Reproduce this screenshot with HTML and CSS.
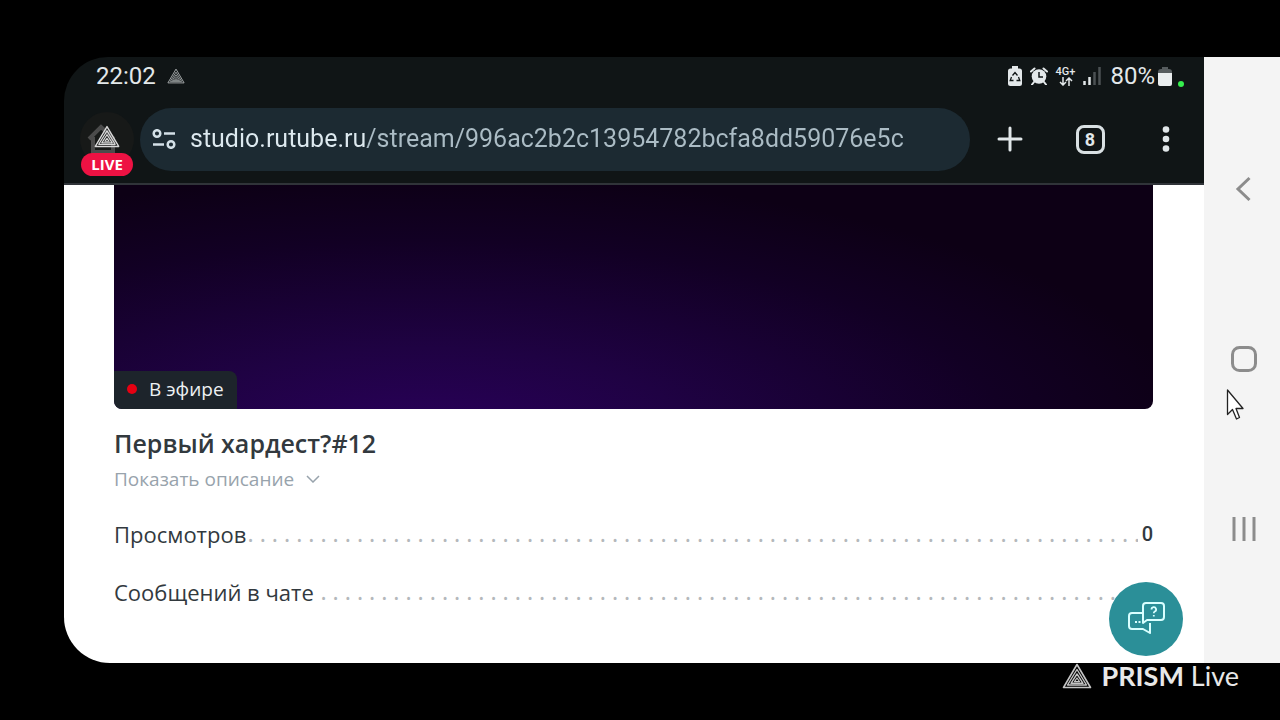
FILE: index.html
```html
<!DOCTYPE html>
<html lang="ru">
<head>
    <meta charset="UTF-8">
    <meta name="viewport" content="width=device-width, initial-scale=1.0">
    <title>Первый хардест?#12</title>
    <link rel="stylesheet" href="styles.css">
</head>
<body>

    <!-- Shared logo: nested triangles -->
    <svg class="sprite" aria-hidden="true">
        <symbol id="prism" viewBox="0 0 30 26">
            <g fill="none" stroke="currentColor" stroke-linejoin="round">
                <path d="M15 1.5 28.5 24.5H1.5Z" stroke-width="1.6"/>
                <path d="M15 6.5 24.5 22H5.5Z" stroke-width="1.4"/>
                <path d="M15 11 21 20.3H9Z" stroke-width="1.4"/>
                <path d="M15 15 17.5 18.6H12.5Z" stroke-width="1.2"/>
            </g>
        </symbol>
    </svg>

    <div class="phone">
        <main class="screen">
            <header class="browser">
                <div class="status-bar">
                    <span>22:02</span>
                    <svg class="status-logo" width="18" height="16"><use href="#prism"/></svg>
                    <div class="status-icons">
                        <svg width="14" height="20" viewBox="0 0 14 20">
                            <path d="M4 0h6v2.500h1.500A2.500 2.500 0 0 1 14 5v12.500a2.500 2.500 0 0 1-2.500 2.500h-9A2.500 2.500 0 0 1 0 17.500V5a2.500 2.500 0 0 1 2.500-2.500H4Z" fill="#e3e8ea"/>
                            <path d="M4.500 9.500 7 6.500l2.500 3M10.500 11l1.300 3.500H8.500M5.500 14.500H2.200L3.500 11" fill="none" stroke="#101617" stroke-width="1.300"/>
                        </svg>
                        <svg width="18" height="18" viewBox="0 0 18 18">
                            <circle cx="9" cy="9.500" r="7.300" fill="#e3e8ea"/>
                            <path d="M1 4.500 4.500 1.500M17 4.500 13.500 1.500M4 15l-2 2.500M14 15l2 2.500" stroke="#e3e8ea" stroke-width="2" stroke-linecap="round"/>
                            <path d="M9 5v5h4" fill="none" stroke="#101617" stroke-width="1.500"/>
                        </svg>
                        <span class="network">
                            4G+
                            <svg width="14" height="9" viewBox="0 0 14 9">
                                <path d="M4 0v8M1 5l3 3 3-3M10 9V1M7 4l3-3 3 3" fill="none" stroke="#e3e8ea" stroke-width="1.500"/>
                            </svg>
                        </span>
                        <svg width="18" height="18" viewBox="0 0 18 18">
                            <path d="M1.500 14v4M6.500 10v8" stroke="#e3e8ea" stroke-width="2.500"/>
                            <path d="M11.500 5v13M16.500 0v18" stroke="#4b5153" stroke-width="2.500"/>
                        </svg>
                    </div>
                    <span class="battery">80%
                        <svg width="14" height="19" viewBox="0 0 14 19">
                            <path d="M0 7V5a3 3 0 0 1 3-3h1V0h6v2h1a3 3 0 0 1 3 3v2Z" fill="#565c5e"/>
                            <path d="M0 6h14v11a2 2 0 0 1-2 2H2a2 2 0 0 1-2-2Z" fill="#e9edee"/>
                        </svg>
                    </span>
                    <i class="camera-dot"></i>
                </div>
                <div class="toolbar">
                    <button class="live-button" aria-label="Home">
                        <svg width="54" height="54" viewBox="0 0 54 54">
                            <path d="M13 25v15h20V25M9 27 21 15l13 12" fill="none" stroke="#4b4b4b" stroke-width="4"/>
                            <use href="#prism" x="14" y="13" width="26" height="23"/>
                        </svg>
                        <span class="live-badge">LIVE</span>
                    </button>
                    <div class="address">
                        <svg width="24" height="20" viewBox="0 0 24 20" aria-hidden="true">
                            <g fill="none" stroke="#d3e0e7" stroke-width="2.500">
                                <circle cx="5" cy="4.500" r="3.300"/>
                                <circle cx="19" cy="15.500" r="3.300"/>
                                <path d="M12 4.500h11M1 15.500h11"/>
                            </g>
                        </svg>
                        <input class="url" type="text" aria-label="Address" value="studio.rutube.ru/stream/996ac2b2c13954782bcfa8dd59076e5c">
                    </div>
                    <button class="tool" aria-label="New tab">
                        <svg width="26" height="26" viewBox="0 0 26 26"><path d="M13 2v22M2 13h22" stroke="#e1e7e9" stroke-width="3" stroke-linecap="round"/></svg>
                    </button>
                    <button class="tool" aria-label="Tabs"><span class="tab-count">8</span></button>
                    <button class="tool tool-menu" aria-label="Menu">
                        <svg width="8" height="26" viewBox="0 0 8 26" fill="#e1e7e9"><circle cx="4" cy="3.500" r="3.300"/><circle cx="4" cy="13" r="3.300"/><circle cx="4" cy="22.500" r="3.300"/></svg>
                    </button>
                </div>
            </header>

            <div class="page">
                <div class="preview">
                    <span class="on-air">В эфире</span>
                </div>
                <h1>Первый хардест?#12</h1>
                <button class="show-more">Показать описание
                    <svg width="14" height="8" viewBox="0 0 14 8"><path d="M1 1l6 6 6-6" fill="none" stroke="currentColor" stroke-width="1.500"/></svg>
                </button>
                <dl class="stats">
                    <div class="stat"><dt>Просмотров</dt><dd>0</dd></div>
                    <div class="stat"><dt>Сообщений в чате</dt><dd></dd></div>
                </dl>
            </div>

            <button class="chat-button" aria-label="Помощь">
                <svg width="38" height="36" viewBox="0 0 38 36" fill="none" stroke="#d9ffff" stroke-width="2" stroke-linejoin="round">
                    <path d="M15 12H5a3 3 0 0 0-3 3v10a3 3 0 0 0 3 3h11l7 4V22"/>
                    <path d="M19 2h15a3 3 0 0 1 3 3v11a3 3 0 0 1-3 3H20l-4 3V5a3 3 0 0 1 3-3Z"/>
                    <path d="M24.500 8.500a2.300 2.300 0 1 1 3.300 2c-.8.400-1 .8-1 1.700M26.800 14v1.500" stroke-width="1.800"/>
                    <path d="M8 21h2M11.500 21h2" stroke-width="1.800"/>
                </svg>
            </button>
        </main>

        <nav class="system-nav">
            <button aria-label="Back"><svg width="26" height="26" viewBox="0 0 26 26"><path d="M18.500 2 7 13l11.500 11"/></svg></button>
            <button aria-label="Home"><svg width="26" height="26" viewBox="0 0 26 26"><rect x="1.500" y="1.500" width="23" height="23" rx="7"/></svg></button>
            <button aria-label="Recent apps"><svg width="26" height="26" viewBox="0 0 26 26"><path d="M3 1v24M13 1v24M23 1v24"/></svg></button>
            <svg class="cursor" width="20" height="34" viewBox="0 0 20 34"><path d="M1.500 2v24.500l5-5 4 9.500 3-1.500-3.500-9h7Z" fill="#fff" stroke="#222" stroke-width="1.300" stroke-linejoin="round"/></svg>
        </nav>
    </div>

    <footer class="watermark">
        <svg width="30" height="26"><use href="#prism"/></svg>
        <span><b>PRISM</b> Live</span>
    </footer>

</body>
</html>
```
FILE: styles.css
```css
* {
    box-sizing: border-box;
}

body {
    margin: 0;
    min-height: 100vh;
    padding-top: 57px;
    display: flex;
    flex-direction: column;
    background-color: #000;
    font-family: "Open Sans", "Noto Sans", sans-serif;
}

button {
    padding: 0;
    border: none;
    background: none;
    font-family: inherit;
    cursor: pointer;
}

.sprite {
    position: absolute;
    width: 0;
    height: 0;
}

.phone {
    flex: 1;
    display: flex;
    margin-left: 64px;
}

.screen {
    position: relative;
    flex: 1;
    display: flex;
    flex-direction: column;
    border-radius: 44px 0 0 46px;
    overflow: hidden;
}

/* Browser bars */
.browser {
    background-color: #101516;
    border-bottom: 2px solid #303439;
    font-family: Roboto, sans-serif;
    color: #e3e8ea;
}

.status-bar {
    display: flex;
    align-items: center;
    height: 38px;
    padding: 0 20px 0 32px;
    font-size: 24px;
}

.status-logo {
    margin-left: 11px;
    color: #a5a9aa;
}

.status-icons {
    display: flex;
    align-items: center;
    gap: 8px;
    margin-left: auto;
    margin-right: 9px;
}

.network {
    display: flex;
    flex-direction: column;
    align-items: center;
    font-size: 11px;
    line-height: 10px;
    font-weight: 500;
}

.battery {
    display: flex;
    align-items: center;
    gap: 3px;
}

.camera-dot {
    width: 6px;
    height: 6px;
    margin: 16px 0 0 6px;
    border-radius: 50%;
    background-color: #35ef4d;
}

.toolbar {
    display: flex;
    align-items: center;
    height: 88px;
    padding: 0 2px 0 16px;
}

.live-button {
    position: relative;
    width: 54px;
    height: 54px;
    margin-right: 6px;
    border-radius: 50%;
    background-color: #171918;
    color: #d8d8d8;
}

.live-badge {
    position: absolute;
    left: 1px;
    bottom: -10px;
    width: 52px;
    border-radius: 12px;
    background-color: #ee1243;
    color: #fff;
    font: bold 15px/23px "Open Sans", sans-serif;
}

.address {
    flex: 1;
    display: flex;
    align-items: center;
    gap: 14px;
    height: 63px;
    padding: 0 12px;
    border-radius: 32px;
    background-color: #1c2a32;
}

/* Host is brighter than the path */
.url {
    flex: 1;
    min-width: 0;
    padding: 0;
    border: none;
    outline: none;
    font: 25px/36px Roboto, sans-serif;
    color: transparent;
    background: linear-gradient(to right, #dde9ef 177px, #abbcc5 177px);
    background-clip: text;
    -webkit-background-clip: text;
}

.tool {
    display: flex;
    align-items: center;
    justify-content: center;
    width: 80px;
    height: 64px;
}

.tool-menu {
    width: 72px;
}

.tab-count {
    width: 29px;
    height: 29px;
    border: 3px solid #d9e0e3;
    border-radius: 8px;
    font: bold 18px/23px Roboto, sans-serif;
    color: #e1e7e9;
}

/* Stream page */
.page {
    flex: 1;
    padding: 0 51px 0 50px;
    background-color: #fff;
    color: #32393e;
}

.preview {
    display: flex;
    align-items: flex-end;
    height: 224px;
    border-radius: 0 0 8px 8px;
    overflow: hidden;
    background: radial-gradient(ellipse 75% 120% at 30% 115%, #2a005c 0%, #1f0243 35%, #120024 75%, #0d0015 100%);
}

.on-air {
    display: flex;
    align-items: center;
    gap: 12px;
    height: 38px;
    padding: 0 13px 2px;
    border-radius: 0 8px 0 0;
    background-color: #1d242b;
    font-size: 19px;
    color: #eef1f3;
}

.on-air::before {
    content: "";
    width: 10px;
    height: 10px;
    border-radius: 50%;
    background-color: #e60012;
}

h1 {
    margin: 16px 0 0;
    font-size: 25px;
    line-height: 36px;
    font-weight: 600;
}

.show-more {
    display: flex;
    align-items: center;
    gap: 12px;
    margin-top: 3px;
    font-size: 19px;
    line-height: 30px;
    color: #98a3ac;
}

.stats {
    margin: 23px 0 0;
}

.stat {
    position: relative;
    display: flex;
    justify-content: space-between;
    height: 34px;
    margin-bottom: 24px;
    overflow: hidden;
    font-size: 22px;
    line-height: 34px;
}

/* Dotted leader, runs under the label and the value */
.stat::before {
    content: ". . . . . . . . . . . . . . . . . . . . . . . . . . . . . . . . . . . . . . . . . . . . . . . . . . . . . . . . . . . . . . . . . . . . . . . . . . . . . . . . . . . . . . . . . . . . . . . . . . . . . . . . . . . . . . . . . . . . . . . . . . . . . . . . . . . . . . . . . . . . . . .";
    position: absolute;
    left: 0;
    font-family: "Noto Sans", sans-serif;
    font-size: 23px;
    line-height: 32px;
    white-space: nowrap;
    color: #b4b8bb;
}

.stat dt,
.stat dd {
    position: relative;
    margin: 0;
    background-color: #fff;
}

.stat dd {
    padding-left: 4px;
    font-family: Roboto, sans-serif;
    font-size: 20px;
    font-weight: 500;
}

.chat-button {
    position: absolute;
    right: 21px;
    bottom: 7px;
    display: flex;
    align-items: center;
    justify-content: center;
    width: 74px;
    height: 74px;
    border-radius: 50%;
    background-color: #2b8f98;
}

/* Android navigation */
.system-nav {
    position: relative;
    display: flex;
    flex-direction: column;
    align-items: center;
    justify-content: space-between;
    width: 76px;
    padding: 108px 0 110px;
    background-color: #f4f4f4;
}

.system-nav button {
    display: flex;
    align-items: center;
    justify-content: center;
    width: 48px;
    height: 48px;
    margin-left: 3px;
    fill: none;
    stroke: #8c8c8c;
    stroke-width: 3px;
}

.cursor {
    position: absolute;
    left: 22px;
    top: 331px;
}

.watermark {
    display: flex;
    align-items: flex-start;
    justify-content: flex-end;
    gap: 10px;
    height: 57px;
    padding-right: 41px;
    color: #e8e8e8;
    font: 27px/26px Lato, sans-serif;
}

.watermark svg {
    color: #c4c4c4;
}
```
